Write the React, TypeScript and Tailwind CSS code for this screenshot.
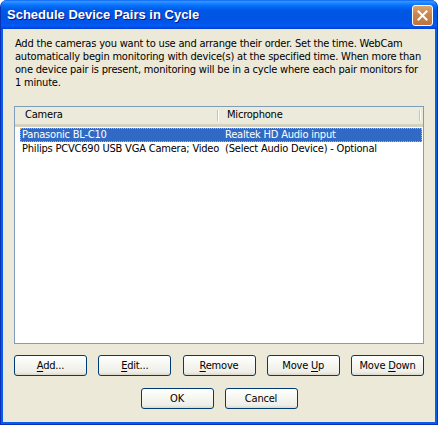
import React from 'react';

const font = { fontFamily: '"DejaVu Sans Condensed", "Liberation Sans", Arial, sans-serif' };
const titleFont = { fontFamily: '"Liberation Sans", Arial, sans-serif' };

const Mn = ({ text, k }: { text: string; k: number }) => (
  <span className="whitespace-pre">
    {text.slice(0, k)}
    <span className="underline underline-offset-[2px]">{text[k]}</span>
    {text.slice(k + 1)}
  </span>
);

const XpButton = ({ label, k }: { label: string; k?: number }) => (
  <button className="w-[73px] h-[21px] rounded-[3px] border border-[#003C74] bg-[linear-gradient(to_bottom,#FFFFFF_0%,#F7F7F3_40%,#EFEEE7_85%,#DCD8CB_100%)] text-[11px] tracking-[-0.2px] leading-none text-black flex items-center justify-center">
    {k === undefined ? <span>{label}</span> : <Mn text={label} k={k} />}
  </button>
);

const rows = [
  { cam: 'Panasonic BL-C10', mic: 'Realtek HD Audio input', sel: true },
  { cam: 'Philips PCVC690 USB VGA Camera; Video', mic: '(Select Audio Device) - Optional', sel: false },
];

export default function App() {
  return (
    <div className="w-[438px] h-[425px] bg-white" style={font}>
      <div className="w-full h-full flex flex-col rounded-t-[7px] overflow-hidden bg-[#0A5CEA] border-x border-b border-[#0831B8]">
        {/* title bar */}
        <div className="h-[29px] shrink-0 flex items-center justify-between pl-[6px] pr-[4px] bg-[linear-gradient(to_bottom,#0058EE_0%,#3A93FF_4%,#288EFF_8%,#127DFF_14%,#036FFC_20%,#0262EE_28%,#0057E5_36%,#0054E3_60%,#0055EB_80%,#005BF5_88%,#0050E0_94%,#003DD7_100%)]">
          <span className="text-white font-bold text-[13px] [text-shadow:1px_1px_0_#0A1883]" style={titleFont}>Schedule Device Pairs in Cycle</span>
          <div className="w-[21px] h-[21px] mt-[2px] rounded-[3px] border border-white bg-[linear-gradient(to_bottom,#DFA46C_0%,#CB8448_45%,#C0763A_100%)] flex items-center justify-center">
            <svg width="11" height="11" viewBox="0 0 11 11">
              <path d="M1.5 1.5 L9.5 9.5 M9.5 1.5 L1.5 9.5" stroke="white" strokeWidth="2" strokeLinecap="square" />
            </svg>
          </div>
        </div>

        {/* client area */}
        <div className="flex-1 mx-[2px] mb-[2px] bg-[#ECE9D8] flex flex-col pt-[8px] pb-[12px] px-[11px] text-[11px] tracking-[-0.2px]">
          <div className="pl-[1px] leading-[13px] text-black whitespace-nowrap">
            <div>Add the cameras you want to use and arrange their order. Set the time. WebCam</div>
            <div>automatically begin monitoring with device(s) at the specified time. When more than</div>
            <div>one device pair is present, monitoring will be in a cycle where each pair monitors for</div>
            <div>1 minute.</div>
          </div>

          {/* list view */}
          <div className="mt-[17px] h-[238px] border border-[#7F9DB9] bg-white flex flex-col">
            <div className="h-[20px] shrink-0 flex bg-[#EBEADB] border-b-[3px] border-[#D6D2C2] text-black">
              <div className="w-[203px] flex items-center pl-[10px] border-r border-[#C7C5B2] shadow-[1px_0_0_#FFFFFF] my-[3px]">Camera</div>
              <div className="w-[202px] flex items-center pl-[9px] border-r border-[#C7C5B2] shadow-[1px_0_0_#FFFFFF] my-[3px]">Microphone</div>
            </div>
            <div className="pt-[1px] pl-[5px] pr-[1px]">
              {rows.map(r => (
                <div
                  key={r.cam}
                  className={`h-[14px] flex items-center ${r.sel ? 'bg-[#316AC5] text-white border border-dotted border-[#E8A848]' : 'text-black border border-transparent'}`}
                >
                  <div className="w-[204px] shrink-0 pl-[1px] whitespace-nowrap">{r.cam}</div>
                  <div className="whitespace-nowrap">{r.mic}</div>
                </div>
              ))}
            </div>
          </div>

          <div className="mt-[11px] flex justify-between">
            <XpButton label="Add..." k={0} />
            <XpButton label="Edit..." k={0} />
            <XpButton label="Remove" k={0} />
            <XpButton label="Move Up" k={5} />
            <XpButton label="Move Down" k={5} />
          </div>
          <div className="mt-[12px] flex justify-center gap-[11px]">
            <XpButton label="OK" />
            <XpButton label="Cancel" />
          </div>
        </div>
      </div>
    </div>
  );
}
